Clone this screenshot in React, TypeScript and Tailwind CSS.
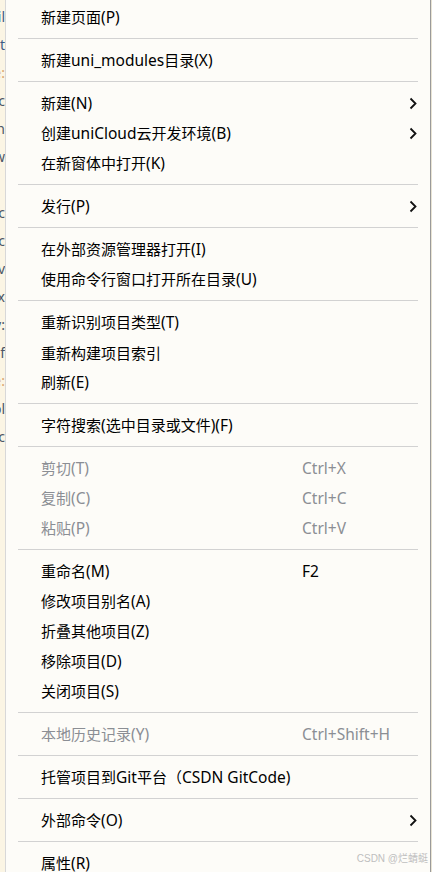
import React from 'react';

type Item =
  | { type: 'sep' }
  | { type: 'item'; label: string; shortcut?: string; disabled?: boolean; sub?: boolean };

const items: Item[] = [
  { type: 'item', label: '新建页面(P)' },
  { type: 'sep' },
  { type: 'item', label: '新建uni_modules目录(X)' },
  { type: 'sep' },
  { type: 'item', label: '新建(N)', sub: true },
  { type: 'item', label: '创建uniCloud云开发环境(B)', sub: true },
  { type: 'item', label: '在新窗体中打开(K)' },
  { type: 'sep' },
  { type: 'item', label: '发行(P)', sub: true },
  { type: 'sep' },
  { type: 'item', label: '在外部资源管理器打开(I)' },
  { type: 'item', label: '使用命令行窗口打开所在目录(U)' },
  { type: 'sep' },
  { type: 'item', label: '重新识别项目类型(T)' },
  { type: 'item', label: '重新构建项目索引' },
  { type: 'item', label: '刷新(E)' },
  { type: 'sep' },
  { type: 'item', label: '字符搜索(选中目录或文件)(F)' },
  { type: 'sep' },
  { type: 'item', label: '剪切(T)', shortcut: 'Ctrl+X', disabled: true },
  { type: 'item', label: '复制(C)', shortcut: 'Ctrl+C', disabled: true },
  { type: 'item', label: '粘贴(P)', shortcut: 'Ctrl+V', disabled: true },
  { type: 'sep' },
  { type: 'item', label: '重命名(M)', shortcut: 'F2' },
  { type: 'item', label: '修改项目别名(A)' },
  { type: 'item', label: '折叠其他项目(Z)' },
  { type: 'item', label: '移除项目(D)' },
  { type: 'item', label: '关闭项目(S)' },
  { type: 'sep' },
  { type: 'item', label: '本地历史记录(Y)', shortcut: 'Ctrl+Shift+H', disabled: true },
  { type: 'sep' },
  { type: 'item', label: '托管项目到Git平台（CSDN GitCode)' },
  { type: 'sep' },
  { type: 'item', label: '外部命令(O)', sub: true },
  { type: 'sep' },
  { type: 'item', label: '属性(R)' },
];

// bits of the editor behind the menu, only the last letters show
const behind: { t: string; c: string }[] = [
  { t: 'detail', c: 'text-[#3d5a86]' },
  { t: 'import', c: 'text-[#3d5a86]' },
  { t: 'name:', c: 'text-[#d9a46a]' },
  { t: 'src', c: 'text-[#4a5566]' },
  { t: 'main', c: 'text-[#4a5566]' },
  { t: 'new', c: 'text-[#4a5566]' },
  { t: '', c: '' },
  { t: 'func', c: 'text-[#4a5566]' },
  { t: 'ic', c: 'text-[#4a5566]' },
  { t: 'nav', c: 'text-[#4a5566]' },
  { t: 'max', c: 'text-[#4a5566]' },
  { t: 'key:', c: 'text-[#4a5566]' },
  { t: 'if', c: 'text-[#4a5566]' },
  { t: 'value:', c: 'text-[#d9a46a]' },
  { t: 'bool', c: 'text-[#4a5566]' },
  { t: 'sec', c: 'text-[#4a5566]' },
];

// latin runs are a touch wider in the original (Segoe-like), so bump them
function Label({ text }: { text: string }) {
  const parts = text.split(/([\x20-\x7E]+)/).filter(Boolean);
  return (
    <>
      {parts.map((p, i) =>
        /^[\x20-\x7E]+$/.test(p) ? (
          <span key={i} className="text-[15.5px]">
            {p}
          </span>
        ) : (
          <span key={i}>{p}</span>
        )
      )}
    </>
  );
}

function Chevron() {
  return (
    <svg width="10" height="13" viewBox="0 0 10 13" className="shrink-0">
      <path d="M2.5 1.5 L7.5 6.5 L2.5 11.5" fill="none" stroke="#111" strokeWidth="1.8" />
    </svg>
  );
}

export default function App() {
  return (
    <div
      className="relative flex h-[872px] w-[432px] overflow-hidden bg-[#fbf5e4] text-[15px]"
      style={{ fontFamily: '"Noto Sans", "Noto Sans CJK SC", sans-serif' }}
    >
      {/* editor strip on the left */}
      <div className="flex w-[5px] shrink-0 flex-col pt-[3px] text-[14px] leading-[28px]">
        {behind.map((b, i) => (
          <div key={i} className={`flex h-[28px] justify-end overflow-hidden whitespace-nowrap ${b.c}`}>
            {b.t}
          </div>
        ))}
      </div>

      {/* menu */}
      <div className="flex w-[426px] shrink-0 flex-col border-x border-x-[#d8d8d8] border-r-[#9a9a9a] bg-[#fdfcf8] pt-[2px]">
        {items.map((it, i) =>
          it.type === 'sep' ? (
            <div key={i} className="flex h-[13px] shrink-0 items-center px-[12px]">
              <div className="h-px w-full bg-[#d2d2d2]" />
            </div>
          ) : (
            <div
              key={i}
              className={`flex h-[30px] shrink-0 items-center pl-[35px] pr-[12px] pt-[2px] whitespace-nowrap ${
                it.disabled ? 'text-[#8b8e94]' : 'text-black'
              }`}
            >
              <span className="w-[261px] shrink-0">
                <Label text={it.label} />
              </span>
              <span className="flex-1 text-[15.5px]">{it.shortcut}</span>
              {it.sub && (
                <span className="-mt-[2px] flex">
                  <Chevron />
                </span>
              )}
            </div>
          )
        )}
      </div>

      <div className="w-px shrink-0 bg-[#e9e4d4]" />

      <div
        className="absolute bottom-[6px] right-[4px] text-[10px] text-[#bfbfbf]"
        style={{ fontFamily: '"Liberation Sans", "Noto Sans CJK SC", sans-serif' }}
      >
        CSDN @烂蜻蜓
      </div>
    </div>
  );
}
